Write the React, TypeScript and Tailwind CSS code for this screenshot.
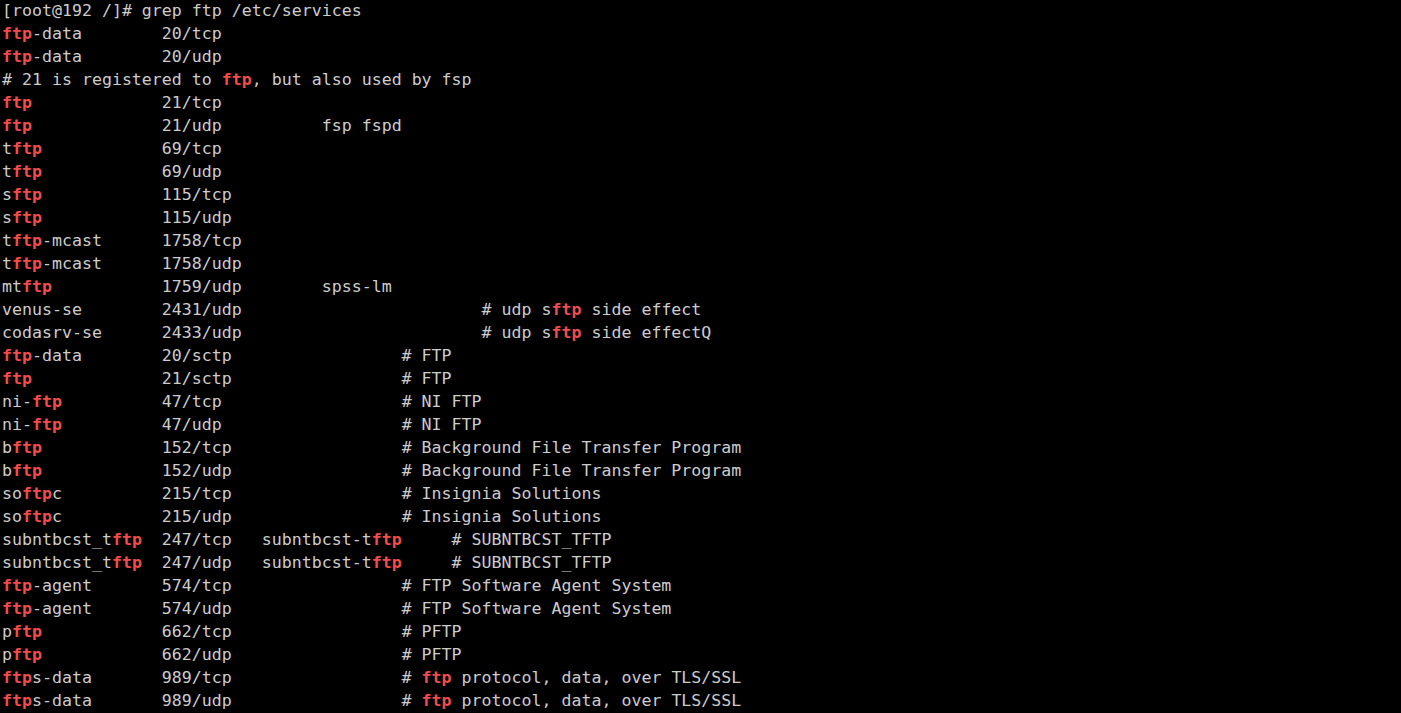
const lines: string[] = [
  '[root@192 /]# grep ftp /etc/services',
  'ftp-data        20/tcp',
  'ftp-data        20/udp',
  '# 21 is registered to ftp, but also used by fsp',
  'ftp             21/tcp',
  'ftp             21/udp          fsp fspd',
  'tftp            69/tcp',
  'tftp            69/udp',
  'sftp            115/tcp',
  'sftp            115/udp',
  'tftp-mcast      1758/tcp',
  'tftp-mcast      1758/udp',
  'mtftp           1759/udp        spss-lm',
  'venus-se        2431/udp                        # udp sftp side effect',
  'codasrv-se      2433/udp                        # udp sftp side effectQ',
  'ftp-data        20/sctp                 # FTP',
  'ftp             21/sctp                 # FTP',
  'ni-ftp          47/tcp                  # NI FTP',
  'ni-ftp          47/udp                  # NI FTP',
  'bftp            152/tcp                 # Background File Transfer Program',
  'bftp            152/udp                 # Background File Transfer Program',
  'softpc          215/tcp                 # Insignia Solutions',
  'softpc          215/udp                 # Insignia Solutions',
  'subntbcst_tftp  247/tcp   subntbcst-tftp     # SUBNTBCST_TFTP',
  'subntbcst_tftp  247/udp   subntbcst-tftp     # SUBNTBCST_TFTP',
  'ftp-agent       574/tcp                 # FTP Software Agent System',
  'ftp-agent       574/udp                 # FTP Software Agent System',
  'pftp            662/tcp                 # PFTP',
  'pftp            662/udp                 # PFTP',
  'ftps-data       989/tcp                 # ftp protocol, data, over TLS/SSL',
  'ftps-data       989/udp                 # ftp protocol, data, over TLS/SSL',
];

// grep highlights every lowercase "ftp" match in the output (not the prompt line)
function Line({ text, plain }: { text: string; plain?: boolean }) {
  if (plain) return <div className="h-[23px]">{text}</div>;
  const parts = text.split('ftp');
  return (
    <div className="h-[23px]">
      {parts.map((p, i) => (
        <span key={i}>
          {p}
          {i < parts.length - 1 && <span className="font-bold text-[#f14c4c]">ftp</span>}
        </span>
      ))}
    </div>
  );
}

export default function App() {
  return (
    <div className="w-[1401px] h-[713px] overflow-hidden bg-black text-[#cccccc]">
      <pre className="-mt-px pl-[2px] m-0 text-[16.6px] leading-[23px] font-['DejaVu_Sans_Mono',monospace]">
        {lines.map((l, i) => (
          <Line key={i} text={l} plain={i === 0} />
        ))}
      </pre>
    </div>
  );
}
